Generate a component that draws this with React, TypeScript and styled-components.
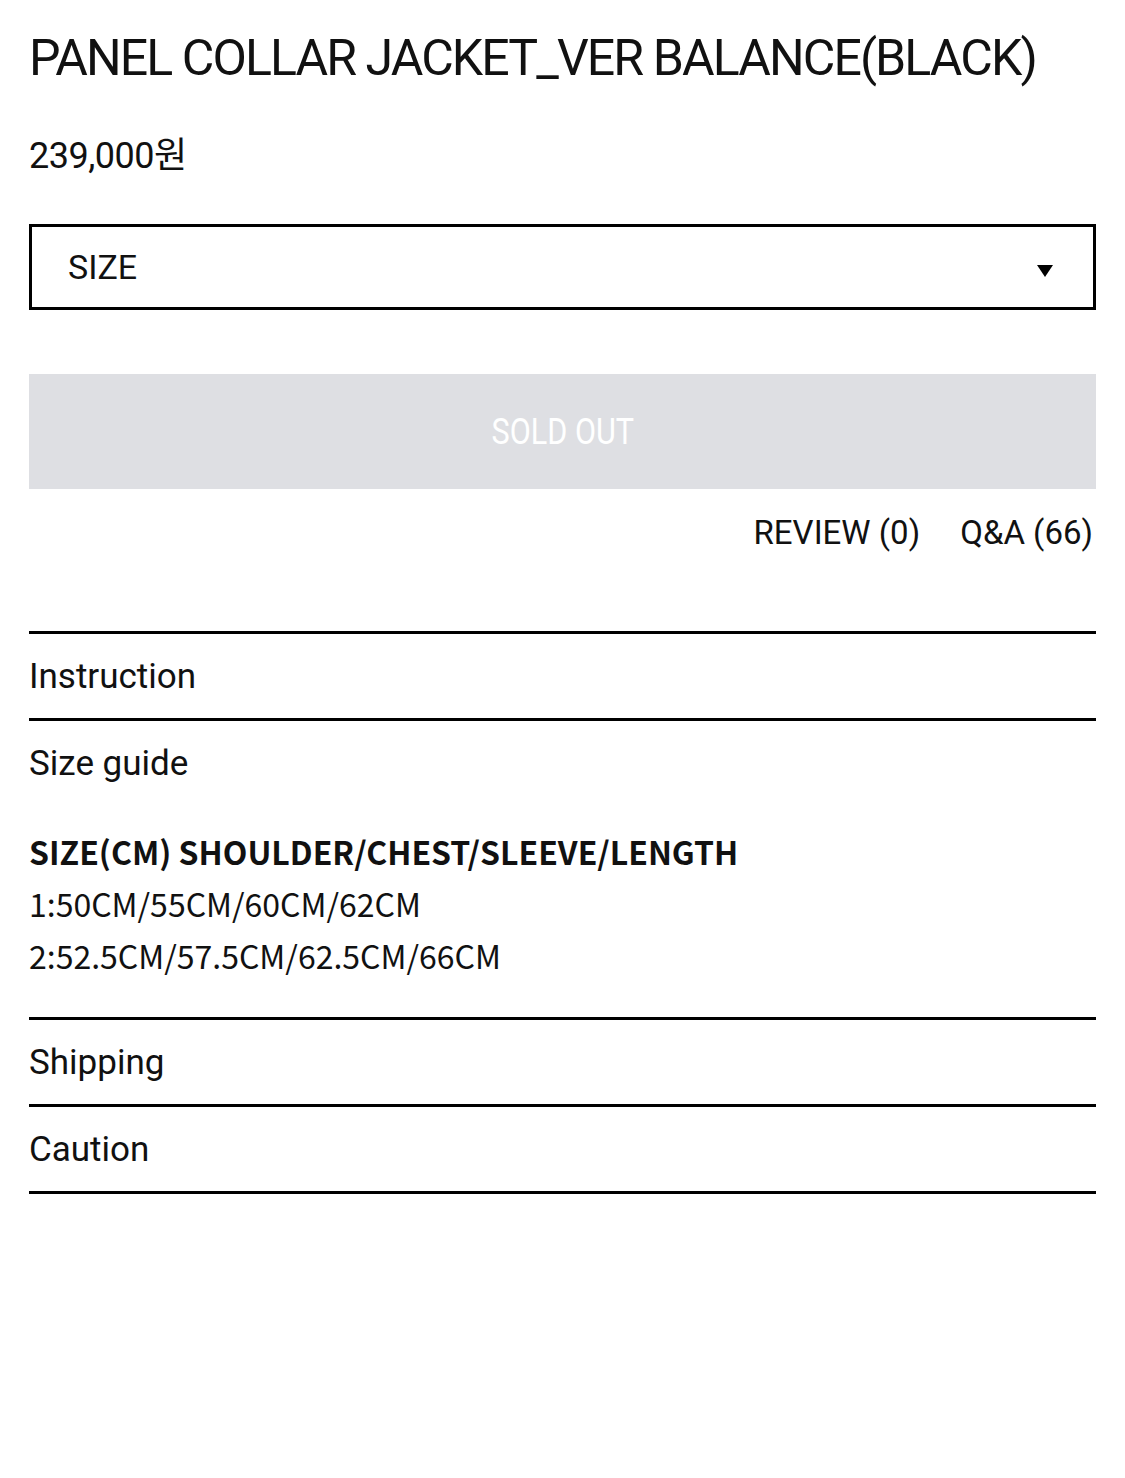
import styled, { createGlobalStyle } from 'styled-components';

const Global = createGlobalStyle`
  html, body {
    margin: 0;
    padding: 0;
    background: #fff;
  }
  body {
    font-family: Roboto, 'Noto Sans CJK KR', sans-serif;
    color: #111;
  }
`;

const Page = styled.div`
  width: 1125px;
  padding: 0 29px;
  box-sizing: border-box;
`;

const Title = styled.h1`
  margin: 0;
  padding-top: 28px;
  font-size: 50px;
  font-weight: 400;
  line-height: 60px;
  letter-spacing: -1.9px;
  white-space: nowrap;
`;

const Price = styled.div`
  margin-top: 45px;
  font-size: 36px;
  line-height: 46px;
  letter-spacing: -0.5px;
`;

const Select = styled.div`
  margin-top: 45px;
  height: 86px;
  box-sizing: border-box;
  border: 3px solid #000;
  display: flex;
  align-items: center;
  justify-content: space-between;
  padding: 0 40px 0 36px;
  font-size: 34px;
`;

const Arrow = styled.span`
  width: 0;
  height: 0;
  border-left: 8px solid transparent;
  border-right: 8px solid transparent;
  border-top: 12px solid #000;
  margin-top: 8px;
`;

const SoldOut = styled.button`
  margin-top: 64px;
  width: 100%;
  height: 115px;
  border: none;
  background: #dedfe3;
  color: #fff;
  font-family: Roboto, sans-serif;
  font-size: 36px;
  cursor: default;
  span {
    display: inline-block;
    transform: scaleX(0.85);
  }
`;

const Tabs = styled.div`
  display: flex;
  justify-content: flex-end;
  gap: 40px;
  margin-top: 24px;
  padding-right: 3px;
  font-size: 33px;
  line-height: 40px;
`;

const Accordion = styled.div`
  margin-top: 78px;
  border-top: 3px solid #000;
`;

const Item = styled.div`
  border-bottom: 3px solid #000;
`;

const Head = styled.div`
  height: 84px;
  display: flex;
  align-items: center;
  font-size: 35px;
`;

const Body = styled.div`
  padding: 20px 0 36px;
  font-family: 'Noto Sans CJK KR', sans-serif;
  font-size: 32px;
  line-height: 52px;
  letter-spacing: 0;
`;

const Strong = styled.div`
  font-weight: 700;
`;

const items = ['Instruction', 'Size guide', 'Shipping', 'Caution'];

export default function App() {
  return (
    <Page>
      <Global />
      <Title>PANEL COLLAR JACKET_VER BALANCE(BLACK)</Title>
      <Price>239,000원</Price>
      <Select>
        <span>SIZE</span>
        <Arrow />
      </Select>
      <SoldOut>
        <span>SOLD OUT</span>
      </SoldOut>
      <Tabs>
        <span>REVIEW (0)</span>
        <span>Q&amp;A (66)</span>
      </Tabs>
      <Accordion>
        {items.map((name) => (
          <Item key={name}>
            <Head>{name}</Head>
            {name === 'Size guide' && (
              <Body>
                <Strong>SIZE(CM) SHOULDER/CHEST/SLEEVE/LENGTH</Strong>
                <div>1:50CM/55CM/60CM/62CM</div>
                <div>2:52.5CM/57.5CM/62.5CM/66CM</div>
              </Body>
            )}
          </Item>
        ))}
      </Accordion>
    </Page>
  );
}
